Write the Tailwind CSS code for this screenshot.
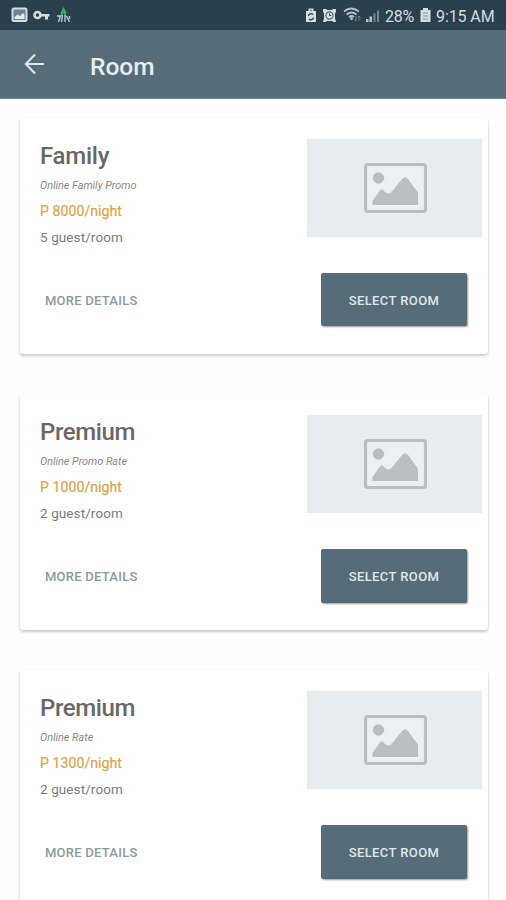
<!DOCTYPE html>
<html lang="en">
<head>
<meta charset="utf-8">
<title>Room</title>
<script src="https://cdn.jsdelivr.net/npm/@tailwindcss/browser@4"></script>
</head>
<body class="w-[506px] h-[900px] overflow-hidden bg-[#fefefe] font-[Roboto,sans-serif]">
<svg class="hidden">
  <symbol id="photo" viewBox="0 0 64 50">
    <rect x="2.500" y="1.500" width="60" height="47" rx="2.500" fill="#edf0f2" stroke="#bcbfc1" stroke-width="3.200"/>
    <circle cx="15.500" cy="15" r="5.800" fill="#bcbfc1"/>
    <path d="M9.500 42V38L16.500 28Q19 24.500 21 28Q24 32 28 29.500L39 16Q42 12.500 45 16L55 29.500V42Z" fill="#bcbfc1"/>
  </symbol>
</svg>
<div class="flex h-[900px] w-[506px] flex-col overflow-hidden">
  <header class="shrink-0">
    <div class="flex h-[30px] items-center justify-between bg-[#2a414d] pl-[11px] pr-[11px] text-[#d3dce0]">
      <div class="flex items-center">
        <svg class="h-[16px] w-[17px]" viewBox="0 0 17 16"><rect x="1.5" y="1.5" width="14" height="12.5" rx="1.5" fill="#70828b" stroke="#d3dce0" stroke-width="2"/><path d="M3.500 12V10L6.500 7.500L9 9L12 6L13.500 8V12Z" fill="#e3eaed"/></svg>
        <svg class="ml-[5px] h-[10px] w-[17px]" viewBox="0 0 17 10"><circle cx="4.500" cy="5" r="3" fill="none" stroke="#d3dce0" stroke-width="2.600"/><path d="M7.500 4H16.500V6.500H15V9.500H12V6.500H7.500Z" fill="#d3dce0"/></svg>
        <svg class="ml-[6px] h-[18px] w-[15px]" viewBox="0 0 15 18"><path d="M7.500 1L10.500 6L9 11L7.500 7L5.500 11L4.500 7Z" fill="#3fa56a"/><path d="M1 10H4.500L2.500 16M6.500 9L5.500 16M9 9V16M10.500 10L13.500 16M13.500 10V13" fill="none" stroke="#c3ced3" stroke-width="1.300"/></svg>
      </div>
      <div class="flex items-center">
        <svg class="h-[16px] w-[12px]" viewBox="0 0 12 16"><path d="M1 4H3.500V1.500H8.500V4H11V15H1Z" fill="#d3dce0"/><path d="M3.500 9A2.600 2.600 0 0 1 8 7.500M8.500 10.500A2.600 2.600 0 0 1 4 12M5.500 3.500H6.500" fill="none" stroke="#2a414d" stroke-width="1.400"/></svg>
        <svg class="ml-[5px] h-[15px] w-[15px]" viewBox="0 0 15 15"><path d="M1 1H4L5.500 2H9.500L11 1H14V4L13 5V10L14 14H11.500L10 13H5L3.500 14H1L2 10V5L1 4Z" fill="#d3dce0"/><circle cx="7.500" cy="7.500" r="3.600" fill="none" stroke="#52666f" stroke-width="1.200"/><path d="M7.500 5.500V7.500H9" fill="none" stroke="#2a414d"/></svg>
        <svg class="ml-[6px] h-[16px] w-[19px]" viewBox="0 0 19 16"><path d="M1 4.500Q8 -1.500 16 4.500M3.500 7.500Q8.500 3.500 13.500 7.500M6 10Q8.500 8 11 10" fill="none" stroke="#b3c0c6" stroke-width="1.700"/><circle cx="8.500" cy="11.500" r="1.500" fill="#b3c0c6"/><path d="M13 9V14M11.500 12L13 14M16 14V9M14.800 11L16 9L17.500 11" fill="none" stroke="#6d818b"/></svg>
        <svg class="ml-[3px] mt-[2px] h-[14px] w-[15px]" viewBox="0 0 15 14"><path d="M1 10H3.500V13H1ZM4.500 7.500H7V13H4.500Z" fill="#b3c0c6"/><path d="M8.500 4.500H10.500V13H8.500ZM12 1.500H14V13H12Z" fill="#72858f"/></svg>
        <span class="ml-[5px] mt-[3px] w-[30px] whitespace-nowrap text-[16px] leading-[20px] tracking-[-0.2px]">28%</span>
        <svg class="ml-[5px] h-[16px] w-[11px]" viewBox="0 0 11 16"><path d="M.5 3H3V1H8V3H10.500V15H.5Z" fill="#d3dce0"/><path d="M3 6H8M3 9H8M3 12H8" stroke="#8b9aa2" stroke-width="1"/></svg>
        <span class="ml-[5px] mt-[3px] w-[59px] whitespace-nowrap text-[16px] leading-[20px] tracking-[-0.1px]">9:15 AM</span>
      </div>
    </div>
    <div class="flex h-[69px] items-center border-b border-[#6d818b] bg-[#566d79] pl-[24px]">
      <svg class="h-[22px] w-[22px]" viewBox="0 0 22 22"><path d="M20 11H2M11 1.500L1.800 11L11 20.500" fill="none" stroke="#e0e8eb" stroke-width="2.100"/></svg>
      <h1 class="ml-[44px] mt-[5px] text-[24.500px] font-medium leading-[30px] text-[#e8eef0]">Room</h1>
    </div>
  </header>
  <main class="flex flex-col gap-[40px] pl-[20px] pr-[18px] pt-[19px]">
    <article class="flex h-[236px] shrink-0 flex-col rounded-[3px] bg-white shadow-[0_2px_3px_rgba(0,0,0,0.2),0_0_2px_rgba(0,0,0,0.07)]">
      <div class="flex justify-between pl-[20px] pr-[6px] pt-[21px]">
        <div class="whitespace-nowrap">
          <h2 class="mt-[2px] text-[24px] font-medium leading-[30px] tracking-[-0.25px] text-[#686868]">Family</h2>
          <p class="mt-[8px] text-[10.800px] italic leading-[14px] text-[#888]">Online Family Promo</p>
          <p class="mt-[8px] text-[14px] leading-[20px] tracking-[0.1px] text-[#dda344] [-webkit-text-stroke:0.2px_#dda344]">P 8000/night</p>
          <p class="mt-[6px] text-[13.500px] leading-[20px] tracking-[0.1px] text-[#7b7b7b]">5 guest/room</p>
        </div>
        <div class="flex h-[98px] w-[175px] items-center justify-center bg-[#e8edf1]"><svg class="h-[50px] w-[64px]"><use href="#photo"/></svg></div>
      </div>
      <div class="mt-auto flex items-center justify-between pb-[28px] pl-[25px] pr-[21px]">
        <button class="pt-[2px] text-[13px] font-medium tracking-[0.25px] text-[#8b9a9f]">MORE DETAILS</button>
        <button class="h-[53px] w-[146px] rounded-[2px] bg-[#566d79] pt-[2px] text-[13px] font-medium tracking-[0.4px] text-[#dfe7ea] shadow-[1px_1px_2px_rgba(0,0,0,0.4)]">SELECT ROOM</button>
      </div>
    </article>
    <article class="flex h-[236px] shrink-0 flex-col rounded-[3px] bg-white shadow-[0_2px_3px_rgba(0,0,0,0.2),0_0_2px_rgba(0,0,0,0.07)]">
      <div class="flex justify-between pl-[20px] pr-[6px] pt-[21px]">
        <div class="whitespace-nowrap">
          <h2 class="mt-[2px] text-[24px] font-medium leading-[30px] tracking-[-0.4px] text-[#686868]">Premium</h2>
          <p class="mt-[8px] text-[10.800px] italic leading-[14px] text-[#888]">Online Promo Rate</p>
          <p class="mt-[8px] text-[14px] leading-[20px] tracking-[0.1px] text-[#dda344] [-webkit-text-stroke:0.2px_#dda344]">P 1000/night</p>
          <p class="mt-[6px] text-[13.500px] leading-[20px] tracking-[0.1px] text-[#7b7b7b]">2 guest/room</p>
        </div>
        <div class="flex h-[98px] w-[175px] items-center justify-center bg-[#e8edf1]"><svg class="h-[50px] w-[64px]"><use href="#photo"/></svg></div>
      </div>
      <div class="mt-auto flex items-center justify-between pb-[27px] pl-[25px] pr-[21px]">
        <button class="pt-[2px] text-[13px] font-medium tracking-[0.25px] text-[#8b9a9f]">MORE DETAILS</button>
        <button class="h-[54px] w-[146px] rounded-[2px] bg-[#566d79] pt-[2px] text-[13px] font-medium tracking-[0.4px] text-[#dfe7ea] shadow-[1px_1px_2px_rgba(0,0,0,0.4)]">SELECT ROOM</button>
      </div>
    </article>
    <article class="flex h-[236px] shrink-0 flex-col rounded-[3px] bg-white shadow-[0_2px_3px_rgba(0,0,0,0.2),0_0_2px_rgba(0,0,0,0.07)]">
      <div class="flex justify-between pl-[20px] pr-[6px] pt-[21px]">
        <div class="whitespace-nowrap">
          <h2 class="mt-[2px] text-[24px] font-medium leading-[30px] tracking-[-0.4px] text-[#686868]">Premium</h2>
          <p class="mt-[8px] text-[10.800px] italic leading-[14px] text-[#888]">Online Rate</p>
          <p class="mt-[8px] text-[14px] leading-[20px] tracking-[0.1px] text-[#dda344] [-webkit-text-stroke:0.2px_#dda344]">P 1300/night</p>
          <p class="mt-[6px] text-[13.500px] leading-[20px] tracking-[0.1px] text-[#7b7b7b]">2 guest/room</p>
        </div>
        <div class="flex h-[98px] w-[175px] items-center justify-center bg-[#e8edf1]"><svg class="h-[50px] w-[64px]"><use href="#photo"/></svg></div>
      </div>
      <div class="mt-auto flex items-center justify-between pb-[27px] pl-[25px] pr-[21px]">
        <button class="pt-[2px] text-[13px] font-medium tracking-[0.25px] text-[#8b9a9f]">MORE DETAILS</button>
        <button class="h-[54px] w-[146px] rounded-[2px] bg-[#566d79] pt-[2px] text-[13px] font-medium tracking-[0.4px] text-[#dfe7ea] shadow-[1px_1px_2px_rgba(0,0,0,0.4)]">SELECT ROOM</button>
      </div>
    </article>
  </main>
</div>
</body>
</html>
